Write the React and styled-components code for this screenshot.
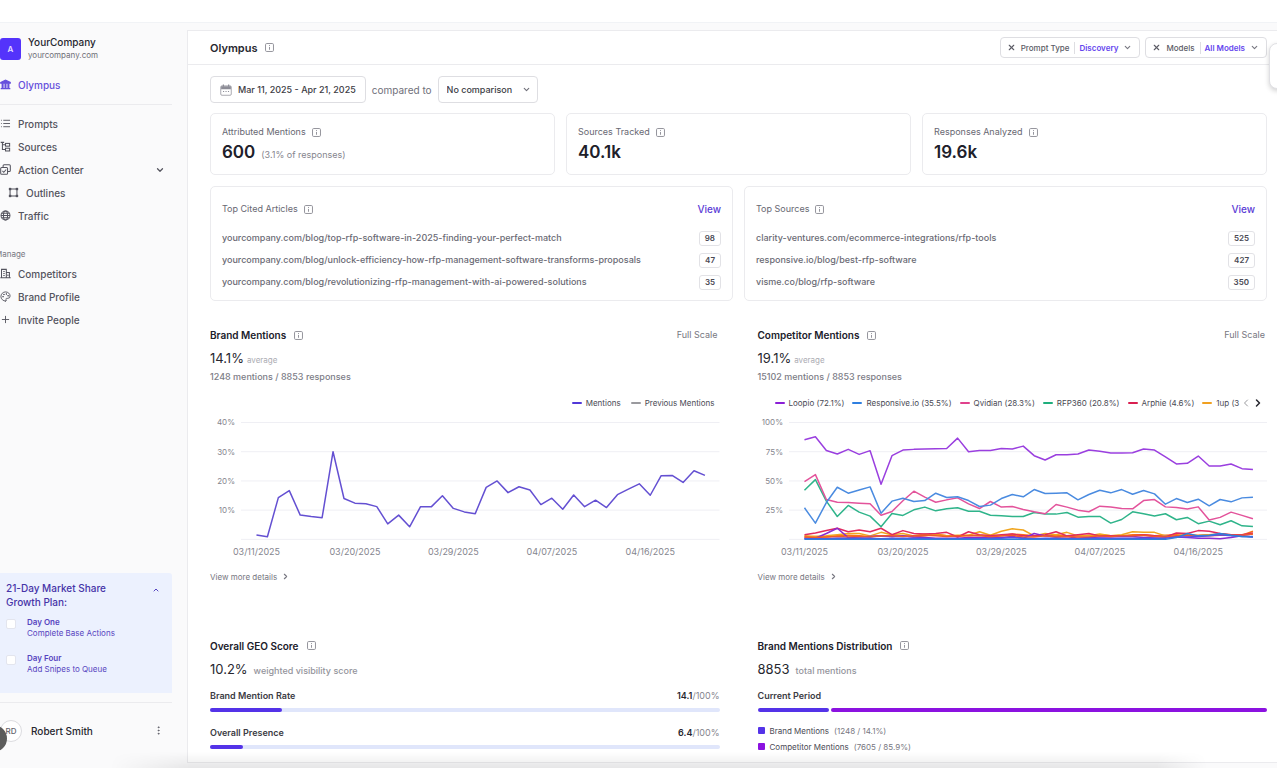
import React, { useState } from "react";
import styled, { createGlobalStyle } from "styled-components";
import { ChevronDown, ChevronUp, ChevronLeft, ChevronRight, List, Palette, Plus, X, EllipsisVertical } from "lucide-react";

const GlobalStyle = createGlobalStyle`
  * {
    box-sizing: border-box;
  }
  body {
    margin: 0;
    background: #ffffff;
    color: #27272f;
    font-family: Inter, "Liberation Sans", sans-serif;
    font-size: 9px;
    line-height: 12px;
  }
  button, select, input {
    font: inherit;
    color: inherit;
    margin: 0;
  }
  button {
    background: none;
    border: 0;
    padding: 0;
    cursor: pointer;
  }
  a {
    color: inherit;
    text-decoration: none;
  }
  h1, h2, p, ul {
    margin: 0;
    padding: 0;
  }
  small {
    line-height: 12px;
  }
  svg {
    flex: none;
  }
`;

const Page = styled.div`
  min-height: 100vh;
  display: flex;
  flex-direction: column;
  overflow: hidden;
  padding: 22px 0 4px;
`;
const Shell = styled.div`
  flex: 1;
  display: flex;
  background: #fafafb;
  border-top: 1px solid #f1f3f6;
  position: relative;
  /* soft shade under the panel */
  &::after {
    content: "";
    position: absolute;
    left: 110px;
    right: 70px;
    bottom: 0;
    height: 16px;
    background: linear-gradient(transparent, rgba(0, 0, 0, 0.08));
    mask-image: linear-gradient(90deg, transparent, #000 80px, #000 calc(100% - 50px), transparent);
    pointer-events: none;
  }
`;

/* sidebar */
const Sidebar = styled.aside`
  width: 195px;
  flex: none;
  margin-left: -8px;
  padding: 13px 15px 0 8px;
  display: flex;
  flex-direction: column;
`;
const Company = styled.div`
  display: flex;
  align-items: center;
  gap: 7px;
`;
const Logo = styled.div`
  width: 21px;
  height: 22px;
  border-radius: 3px;
  background: #5433fb;
  color: #e4deff;
  font-size: 8px;
  font-weight: 600;
  display: flex;
  align-items: center;
  justify-content: center;
`;
const CompanyName = styled.div`
  font-size: 10px;
  font-weight: 500;
  line-height: 13px;
  color: #27272f;
`;
const CompanyUrl = styled.div`
  font-size: 8px;
  color: #6f6f78;
`;
const NavLink = styled.a`
  display: flex;
  align-items: center;
  gap: 7px;
  height: 23px;
  padding-left: ${(props) => (props.$nested ? "8px" : "0")};
  margin-top: ${(props) => (props.$active ? "12px" : "0")};
  font-size: 10px;
  font-weight: 500;
  color: ${(props) => (props.$active ? "#6650dc" : "#54545e")};
  svg:last-child {
    margin: 0 7px 0 auto;
  }
`;
const Rule = styled.hr`
  width: 100%;
  border: 0;
  border-top: 1px solid #ebebee;
  margin: ${(props) => props.$space};
`;
const GroupLabel = styled.div`
  margin: 21px 0 2px -5px;
  font-size: 8px;
  color: #777781;
`;
const Plan = styled.section`
  margin-top: auto;
  min-height: 120px;
  padding: 8px 12px 4px 6px;
  background: #ecf1fe;
  border-radius: 0 3px 0 0;
  color: #5745c0;
`;
const PlanHead = styled.div`
  display: flex;
  justify-content: space-between;
  align-items: flex-start;
  margin-bottom: 8px;
  h2 {
    width: 110px;
    font-size: 10px;
    line-height: 14px;
    font-weight: 500;
    color: #4634a8;
  }
  button {
    height: 16px;
    padding-top: 4px;
  }
`;
const Task = styled.label`
  display: flex;
  gap: 11px;
  margin-bottom: 14px;
  line-height: 11px;
  font-size: 8px;
  b {
    display: block;
    font-weight: 600;
  }
  input {
    appearance: none;
    width: 10px;
    height: 10px;
    margin-top: 2px;
    background: #fff;
    border: 1px solid #e3e5ee;
    border-radius: 2px;
  }
`;
const User = styled.div`
  display: flex;
  align-items: center;
  gap: 9px;
  height: 38px;
  margin-bottom: 18px;
  font-size: 10px;
  font-weight: 500;
  button {
    margin-left: auto;
    margin-right: 8px;
    height: 12px;
    color: #5c5c66;
  }
`;
const Avatar = styled.div`
  width: 22px;
  height: 22px;
  border: 1px solid #dcdce0;
  border-radius: 50%;
  background: #fff;
  font-size: 8px;
  color: #63636c;
  display: flex;
  align-items: center;
  justify-content: center;
`;
const Bubble = styled.div`
  position: absolute;
  left: -20px;
  bottom: 16px;
  width: 27px;
  height: 27px;
  border-radius: 50%;
  background: #5c5c5c;
`;
const SideTab = styled.div`
  position: absolute;
  right: -14px;
  top: 20px;
  width: 22px;
  height: 46px;
  background: #fff;
  border: 1px solid #e0e0e4;
  border-radius: 8px;
  box-shadow: 0 2px 5px rgba(0, 0, 0, 0.18);
`;

/* main panel */
const Main = styled.main`
  flex: 1;
  min-width: 0;
  margin: 7px 0 5px;
  background: #fff;
  border: 1px solid #ebebee;
  border-right: 0;
`;
const TopBar = styled.header`
  display: flex;
  align-items: center;
  height: 34px;
  padding: 0 10px 0 22px;
  border-bottom: 1px solid #ebebee;
  gap: 6px;
  h1 {
    font-size: 11px;
    font-weight: 600;
    margin-right: 2px;
  }
`;
const Filters = styled.div`
  margin-left: auto;
  display: flex;
  gap: 5px;
`;
const Filter = styled.div`
  display: flex;
  align-items: center;
  height: 21px;
  padding: 0 7px 0 6px;
  border: 1px solid #dedee2;
  border-radius: 4px;
  font-size: 8px;
  font-weight: 500;
  color: #5c5c66;
  > button:first-child {
    display: flex;
    margin-right: 5px;
  }
`;
const FilterValue = styled.button`
  display: flex;
  align-items: center;
  gap: 5px;
  margin-left: 5px;
  padding-left: 4px;
  border-left: 1px solid #dedee2;
  font-weight: 600;
  color: #6446ee;
  svg {
    color: #777781;
  }
`;
const Content = styled.div`
  padding: 11px 10px 0 22px;
`;
const Controls = styled.div`
  display: flex;
  align-items: center;
  gap: 6px;
  color: #70707a;
  margin-bottom: 10px;
  label {
    font-size: 10px;
  }
`;
const ControlButton = styled.button`
  display: flex;
  align-items: center;
  gap: 6px;
  height: 27px;
  padding: 0 9px;
  border: 1px solid #dedee2;
  border-radius: 4px;
  background: #fff;
  font-weight: 500;
  color: #3c3c44;
`;
const SelectBox = styled.div`
  position: relative;
  select {
    appearance: none;
    height: 27px;
    padding: 0 24px 0 8px;
    border: 1px solid #dedee2;
    border-radius: 4px;
    background: #fff;
    font-weight: 500;
    color: #3c3c44;
  }
  svg {
    position: absolute;
    right: 7px;
    top: 9px;
    pointer-events: none;
  }
`;
const Columns = styled.div`
  display: grid;
  grid-template-columns: repeat(${(props) => props.$count}, minmax(0, 1fr));
  gap: ${(props) => props.$gap};
  margin-bottom: ${(props) => props.$after};
`;
const Card = styled.section`
  border: 1px solid #ebebee;
  border-radius: 5px;
  padding: ${(props) => props.$pad};
`;
const Label = styled.h2`
  display: flex;
  align-items: center;
  gap: 6px;
  font-size: 9px;
  font-weight: 400;
  line-height: 12px;
  color: #686872;
`;
const StatValue = styled.p`
  display: flex;
  align-items: baseline;
  gap: 6px;
  margin-top: 2px;
  font-size: 17px;
  line-height: 24px;
  font-weight: 600;
  color: #20202a;
  small {
    font-size: 9px;
    font-weight: 400;
    color: #85858e;
  }
`;
const CardHead = styled.div`
  display: flex;
  justify-content: space-between;
  align-items: center;
  margin-bottom: 12px;
  a {
    font-size: 10px;
    font-weight: 500;
    color: #5b40d6;
  }
`;
const LinkRow = styled.li`
  display: flex;
  justify-content: space-between;
  align-items: center;
  height: 22px;
  font-weight: 500;
  color: #6a6a74;
`;
const Count = styled.span`
  min-width: 20px;
  height: 15px;
  padding: 0 5px;
  border: 1px solid #e2e2e6;
  border-radius: 3px;
  text-align: center;
  font-size: 8px;
  line-height: 13px;
  font-weight: 600;
  color: #4a4a54;
`;
const Section = styled.section`
  min-width: 0;
`;
const SectionHead = styled.div`
  display: flex;
  align-items: center;
  justify-content: space-between;
  padding-right: 2px;
  color: #777781;
  h2 {
    display: flex;
    align-items: center;
    gap: 8px;
    font-size: 10px;
    font-weight: 600;
    line-height: 14px;
    color: #20202a;
  }
`;
const Figure = styled.p`
  display: flex;
  align-items: baseline;
  gap: ${(props) => props.$gap || "3px"};
  margin-top: 6px;
  font-size: 13px;
  line-height: 20px;
  color: #27272f;
  small {
    font-size: ${(props) => props.$note || "8px"};
    font-weight: ${(props) => (props.$note ? 500 : 400)};
    color: ${(props) => (props.$note ? "#94949c" : "#acacb3")};
  }
`;
const Summary = styled.p`
  margin: 3px 0 14px;
  font-weight: 500;
  color: #7c7c86;
`;
const Legend = styled.ul`
  display: flex;
  align-items: center;
  justify-content: ${(props) => (props.$end ? "flex-end" : "flex-start")};
  gap: ${(props) => (props.$end ? "10px" : "8px")};
  padding: ${(props) => (props.$end ? "0 5px 0 0" : "0 0 0 17px")};
  list-style: none;
  font-size: 8px;
  line-height: 12px;
  color: #4a4a54;
  white-space: nowrap;
`;
const LegendClip = styled.div`
  flex: 1;
  min-width: 0;
  overflow: hidden;
`;
const LegendBar = styled.div`
  display: flex;
  align-items: center;
  padding-right: 3px;
  button {
    height: 12px;
  }
`;
const LegendItem = styled.li`
  display: flex;
  align-items: center;
  gap: 4px;
  &::before {
    content: "";
    width: 10px;
    height: 2px;
    border-radius: 1px;
    background: ${(props) => props.$color};
  }
`;
const ChartSvg = styled.svg`
  display: block;
  width: 100%;
  height: auto;
  margin-top: 6px;
  font-size: 9px;
  fill: #85858e;
`;
const TickLabel = styled.text`
  font-size: 8px;
`;
const More = styled.a`
  display: flex;
  width: fit-content;
  align-items: center;
  gap: 4px;
  margin-top: 12px;
  color: #777781;
  font-size: 8px;
`;
const Meter = styled.div`
  margin-top: ${(props) => props.$top};
`;
const MeterLabel = styled.div`
  display: flex;
  justify-content: space-between;
  font-size: 9px;
  font-weight: 600;
  line-height: 14px;
  color: #3c3c44;
  span {
    font-weight: 400;
    color: #85858e;
  }
  b {
    font-weight: 600;
    color: #27272f;
  }
`;
const Track = styled.div`
  display: flex;
  gap: 2px;
  height: 4px;
  margin-top: 5px;
  border-radius: 2px;
  background: ${(props) => props.$bg || "transparent"};
`;
const Fill = styled.div`
  height: 4px;
  border-radius: 2px;
  background: ${(props) => props.$color};
`;
const Keys = styled.div`
  display: grid;
  gap: 4px;
  margin-top: 13px;
`;
const Key = styled.p`
  display: flex;
  align-items: center;
  gap: 5px;
  font-size: 8px;
  line-height: 12px;
  color: #4a4a54;
  &::before {
    content: "";
    width: 7px;
    height: 7px;
    border-radius: 1px;
    background: ${(props) => props.$color};
  }
  span {
    color: #777781;
  }
`;

const Glyph = ({ children, size = 11, fill = "none" }) => (
  <svg width={size} height={size} viewBox="0 0 16 16" fill={fill} stroke="currentColor" strokeWidth="1.5" aria-hidden="true">
    {children}
  </svg>
);

const InfoIcon = () => (
  <svg width="9" height="9" viewBox="0 0 12 12" fill="none" stroke="#92929a" strokeWidth="1.3" aria-hidden="true">
    <rect x="0.7" y="0.7" width="10.6" height="10.6" rx="1.6" />
    <path d="M6 5.3V9M6 2.8v1.3" />
  </svg>
);

const BankIcon = () => (
  <Glyph fill="currentColor">
    <path d="M1 5 8 1.5 15 5v1H1zM1 14h14" />
    <path d="M3.8 6v8M8 6v8M12.2 6v8" strokeWidth="3" />
  </Glyph>
);
const TreeIcon = () => (
  <Glyph>
    <path d="M1 2h5M3.5 2v10.5h4M3.5 5.5h4" />
    <rect x="8" y="3.5" width="6" height="4" />
    <rect x="8" y="10.5" width="6" height="4" />
  </Glyph>
);
const StackIcon = () => (
  <Glyph>
    <rect x="1" y="5" width="10" height="10" rx="1.5" />
    <path d="M4.5 5V2.5Q4.5 1 6 1h7.500Q15 1 15 2.500v7Q15 11 13.500 11H11M3.500 10l2 2 3.500-4" />
  </Glyph>
);
const OutlineIcon = () => (
  <Glyph>
    <path d="M3 3h10v10H3z" />
    <path d="M1.5 1.5h3v3h-3zM11.5 1.5h3v3h-3zM1.5 11.5h3v3h-3zM11.5 11.5h3v3h-3z" fill="currentColor" strokeWidth="0.5" />
  </Glyph>
);
const GlobeIcon = () => (
  <Glyph>
    <circle cx="8" cy="8" r="6.5" />
    <ellipse cx="8" cy="8" rx="3" ry="6.5" />
    <path d="M1.5 8h13M2.5 4.7h11M2.5 11.3h11" />
  </Glyph>
);
const BuildingIcon = () => (
  <Glyph>
    <path d="M0.5 14.2h15M2.2 14V2h7v12M9.2 6.5h4.5V14M4.8 5h2M4.8 8h2M4.8 11h2M11.5 9.5v2" />
  </Glyph>
);
const CalendarIcon = () => (
  <svg width="12" height="12" viewBox="0 0 16 16" fill="none" stroke="#8c8c96" aria-hidden="true">
    <rect x="1" y="2.5" width="14" height="12.5" rx="1.5" />
    <path d="M1.5 5h13" strokeWidth="4" />
    <path d="M4.5 0.5v3M11.5 0.5v3" strokeWidth="1.6" />
    <path d="M4 10h1.5M7.3 10h1.5M10.6 10h1.5" strokeWidth="1.3" />
  </svg>
);

const mentions = [
  1.5, 0.9, 14.3, 16.7, 8.3, 7.8, 7.4, 30, 14, 12.4, 12.2, 11.2, 5.3, 8.3, 4.3, 11.2, 11.2, 14.9, 10.6, 9.4, 8.8,
  17.8, 20, 16, 18, 16.9, 11.9, 14.1, 10.3, 15.2, 11.2, 13.4, 10.9, 15.3, 17.2, 19, 15.1, 21.8, 21.9, 19.5, 23.5, 21.9,
];

const competitors = [
  {
    color: "#f97316",
    values: [2, 2.5, 2, 3, 3.5, 3, 2.5, 3, 2.5, 3, 2, 3, 4.5, 3, 2.5, 3.5, 3, 3.5, 3, 4.5, 4, 3, 3, 3.5, 3, 3, 3.5, 4, 3, 3, 4, 4, 3, 3.5, 4, 3, 3.5, 4, 4.5, 4, 3.5, 7],
  },
  {
    color: "#f0a51e",
    values: [3, 2.5, 3, 4, 5, 5, 3, 6, 4, 5, 3, 4.5, 4, 3, 3.5, 3.5, 6.5, 3.5, 7, 9, 8, 3, 5, 4, 6, 3, 3, 4.5, 3, 4, 6.5, 6, 6, 3, 3, 4, 3, 4, 3.5, 4, 4, 4.5],
  },
  {
    color: "#e02a5f",
    values: [4, 5.5, 7.5, 9.5, 6.5, 8, 6.5, 9.5, 4, 7.5, 5, 4.5, 5, 6, 2, 6.5, 4, 3, 4, 4.5, 3, 3, 4, 6.5, 3, 4, 5, 3, 3, 3, 3, 4, 3, 2, 5.5, 5, 7.5, 7, 5, 4, 4, 5.5],
  },
  {
    color: "#8b2bd0",
    values: [1, 1, 5, 9.5, 1.5, 2, 2.5, 3, 2.5, 3, 2, 1.5, 1, 1, 1, 1.5, 1.5, 2, 1.5, 2.5, 1, 5, 3, 2, 2.5, 1, 1.5, 2, 2, 2.5, 2.5, 1.5, 2, 2.5, 2, 1.5, 1, 1, 0.5, 1.5, 3, 2],
  },
  {
    color: "#ef5a2b",
    values: [2, 1.5, 2, 2.5, 2, 2.5, 2, 3, 3, 2.5, 3, 3.5, 3, 2.5, 3, 3, 3.5, 2, 3, 3.5, 2, 2, 3, 2, 2.5, 2, 2, 3, 2.5, 3, 3, 3.5, 2.5, 2, 3, 3.5, 3, 3, 3.5, 3.5, 3.5, 4.5],
  },
  {
    color: "#5b4be8",
    values: [0.5, 0.5, 0.5, 1, 1, 1, 1, 0.5, 1, 1, 1, 1, 0.5, 0.5, 0.5, 0.5, 0.5, 1, 1, 1.5, 1, 0.5, 1, 1, 0.5, 0.5, 1, 1, 0.5, 1, 1, 1, 1, 1, 2, 2, 2.5, 3, 4, 3, 2.5, 2.5],
  },
  {
    color: "#2f7fd8",
    values: [0, 0, 0, 0, 0, 0, 0, 0, 0, 0, 0, 0, 0, 0, 0, 0, 0, 0, 0, 0, 0, 0, 0, 0, 0, 0, 0, 0, 0, 0, 0, 0, 0, 0, 1.5, 5, 3, 3.5, 5, 3.5, 2.5, 2],
  },
  {
    color: "#2fb48a",
    values: [42, 51.1, 32.7, 19.6, 29, 23.3, 19.9, 10.8, 22.2, 20.5, 25.3, 27.6, 24.4, 26.1, 27, 24.1, 24.1, 20.7, 20.2, 19.6, 19.6, 23, 21.6, 21.6, 23, 19, 19.6, 19.6, 13.9, 17, 23.6, 21.9, 19.9, 21.9, 16.8, 18.8, 13.4, 15.6, 12.5, 15.9, 11.6, 11.1],
  },
  {
    color: "#e3539b",
    values: [49.4, 55.4, 34.1, 31.8, 31.5, 31, 30.4, 20.7, 23.9, 33, 41.2, 36.1, 31.8, 33.8, 35.5, 30.4, 26.4, 32.4, 27.6, 28.1, 25.6, 23.6, 21.9, 29.8, 27.6, 25, 23.6, 28.4, 27.6, 26.4, 26.1, 33.2, 34.1, 27.8, 27.3, 25.9, 27.8, 16.5, 18.8, 23.3, 20.5, 17.6],
  },
  {
    color: "#4a8be0",
    values: [27, 13.9, 31.5, 44.6, 39.5, 42.3, 44.9, 22.4, 32.7, 35.2, 32.4, 33.2, 39.5, 35.8, 36.4, 33.2, 28.1, 29.3, 34.9, 38.4, 36.4, 42.6, 39.2, 39.5, 39.8, 33.8, 38.4, 42, 39.8, 42.6, 38.6, 41.8, 38.9, 30.1, 34.9, 31.5, 34.4, 28.7, 34.1, 32.1, 35.5, 36.1],
  },
  {
    color: "#9a3fdf",
    values: [85.2, 87.8, 76.1, 73, 77, 72.7, 75.9, 47.2, 71.6, 76.4, 77, 77.3, 77.6, 77.8, 86.6, 75, 76.1, 76.1, 77.8, 77.3, 79.8, 71.6, 67.9, 72.4, 72.4, 73, 76.4, 75.3, 73.9, 73.9, 74.1, 77.3, 76.4, 70.5, 64.5, 65.1, 71.3, 62.8, 62.8, 64.5, 60.5, 59.7],
  },
];

const competitorLegend = [
  ["Loopio (72.1%)", "#8b1fd6"],
  ["Responsive.io (35.5%)", "#2f7fe0"],
  ["Qvidian (28.3%)", "#e0418c"],
  ["RFP360 (20.8%)", "#1fae7c"],
  ["Arphie (4.6%)", "#d91f50"],
  ["1up (3", "#f0a020"],
];

const dates = ["03/11/2025", "03/20/2025", "03/29/2025", "04/07/2025", "04/16/2025"];

const LineChart = ({ label, series, max, ticks }) => {
  const toX = (i) => 46.5 + i * 10.95;
  const toY = (v) => 124.5 - (v / max) * 117;
  return (
    <ChartSvg viewBox="0 0 510 144" role="img" aria-label={label}>
      {[0, ...ticks].map((t) => (
        <line key={t} x1="31" x2="510" y1={toY(t)} y2={toY(t)} stroke="#efeff4" />
      ))}
      {ticks.map((t) => (
        <TickLabel key={t} x="25" y={toY(t) + 3} textAnchor="end">
          {t}%
        </TickLabel>
      ))}
      {dates.map((d, i) => (
        <text key={d} x={toX(i * 9)} y="140" textAnchor="middle">
          {d}
        </text>
      ))}
      {series.map(({ color, values }) => (
        <polyline
          key={color}
          fill="none"
          stroke={color}
          strokeWidth="1.5"
          strokeLinejoin="round"
          points={values.map((v, i) => `${toX(i)},${toY(v)}`).join(" ")}
        />
      ))}
    </ChartSvg>
  );
};

const Stat = ({ label, value, note }) => (
  <Card $pad="12px 11px 10px">
    <Label>
      {label} <InfoIcon />
    </Label>
    <StatValue>
      {value}
      {note && <small>{note}</small>}
    </StatValue>
  </Card>
);

const LinkList = ({ title, rows }) => (
  <Card $pad="16px 11px 7px">
    <CardHead>
      <Label>
        {title} <InfoIcon />
      </Label>
      <a href="#view">View</a>
    </CardHead>
    <ul>
      {rows.map(([url, count]) => (
        <LinkRow key={url}>
          <a href={`#${url}`}>{url}</a>
          <Count>{count}</Count>
        </LinkRow>
      ))}
    </ul>
  </Card>
);

const FilterPill = ({ name, value }) => (
  <Filter>
    <button type="button" aria-label={`Clear ${name}`}>
      <X size={9} strokeWidth={3} />
    </button>
    {name}
    <FilterValue type="button">
      {value} <ChevronDown size={9} strokeWidth={3} />
    </FilterValue>
  </Filter>
);

const Score = ({ label, value, top }) => (
  <Meter $top={top}>
    <MeterLabel>
      {label}
      <span>
        <b>{value}</b>/100%
      </span>
    </MeterLabel>
    <Track $bg="#e0e6fb">
      <Fill $color="#5433e8" style={{ width: `${value}%` }} />
    </Track>
  </Meter>
);

const tasks = [
  ["Day One", "Complete Base Actions"],
  ["Day Four", "Add Snipes to Queue"],
];

const App = () => {
  const [planOpen, setPlanOpen] = useState(true);

  return (
    <Page>
      <GlobalStyle />
      <Shell>
        <Sidebar>
          <Company>
            <Logo>A</Logo>
            <div>
              <CompanyName>YourCompany</CompanyName>
              <CompanyUrl>yourcompany.com</CompanyUrl>
            </div>
          </Company>
          <nav>
            <NavLink href="#olympus" $active><BankIcon /><span>Olympus</span></NavLink>
            <Rule $space="8px 0 7px" />
            <NavLink href="#prompts"><List size={11} /><span>Prompts</span></NavLink>
            <NavLink href="#sources"><TreeIcon /><span>Sources</span></NavLink>
            <NavLink href="#actions"><StackIcon /><span>Action Center</span><ChevronDown size={10} strokeWidth={3} /></NavLink>
            <NavLink href="#outlines" $nested><OutlineIcon /><span>Outlines</span></NavLink>
            <NavLink href="#traffic"><GlobeIcon /><span>Traffic</span></NavLink>
            <GroupLabel>Manage</GroupLabel>
            <NavLink href="#competitors"><BuildingIcon /><span>Competitors</span></NavLink>
            <NavLink href="#brand"><Palette size={11} /><span>Brand Profile</span></NavLink>
            <NavLink href="#invite"><Plus size={11} /><span>Invite People</span></NavLink>
          </nav>
          <Plan>
            <PlanHead>
              <h2>21-Day Market Share Growth Plan:</h2>
              <button type="button" aria-label="Toggle plan" onClick={() => setPlanOpen((prev) => !prev)}>
                <ChevronUp size={8} strokeWidth={3} />
              </button>
            </PlanHead>
            {planOpen &&
              tasks.map(([day, text]) => (
                <Task key={day}>
                  <input type="checkbox" />
                  <span>
                    <b>{day}</b>
                    {text}
                  </span>
                </Task>
              ))}
          </Plan>
          <Rule $space="9px 0" />
          <User>
            <Avatar>RD</Avatar>
            Robert Smith
            <button type="button" aria-label="Account menu">
              <EllipsisVertical size={11} />
            </button>
          </User>
        </Sidebar>

        <Main>
          <TopBar>
            <h1>Olympus</h1>
            <InfoIcon />
            <Filters>
              <FilterPill name="Prompt Type" value="Discovery" />
              <FilterPill name="Models" value="All Models" />
            </Filters>
          </TopBar>
          <Content>
            <Controls>
              <ControlButton type="button">
                <CalendarIcon /> Mar 11, 2025 - Apr 21, 2025
              </ControlButton>
              <label htmlFor="comparison">compared to</label>
              <SelectBox>
                <select id="comparison">
                  <option>No comparison</option>
                </select>
                <ChevronDown size={9} strokeWidth={3} />
              </SelectBox>
            </Controls>

            <Columns $count={3} $gap="11px" $after="11px">
              <Stat label="Attributed Mentions" value="600" note="(3.1% of responses)" />
              <Stat label="Sources Tracked" value="40.1k" />
              <Stat label="Responses Analyzed" value="19.6k" />
            </Columns>

            <Columns $count={2} $gap="11px" $after="27px">
              <LinkList
                title="Top Cited Articles"
                rows={[
                  ["yourcompany.com/blog/top-rfp-software-in-2025-finding-your-perfect-match", 98],
                  ["yourcompany.com/blog/unlock-efficiency-how-rfp-management-software-transforms-proposals", 47],
                  ["yourcompany.com/blog/revolutionizing-rfp-management-with-ai-powered-solutions", 35],
                ]}
              />
              <LinkList
                title="Top Sources"
                rows={[
                  ["clarity-ventures.com/ecommerce-integrations/rfp-tools", 525],
                  ["responsive.io/blog/best-rfp-software", 427],
                  ["visme.co/blog/rfp-software", 350],
                ]}
              />
            </Columns>

            <Columns $count={2} $gap="38px" $after="56px">
              <Section>
                <SectionHead>
                  <h2>Brand Mentions <InfoIcon /></h2>
                  Full Scale
                </SectionHead>
                <Figure>14.1% <small>average</small></Figure>
                <Summary>1248 mentions / 8853 responses</Summary>
                <Legend $end>
                  <LegendItem $color="#5238d8">Mentions</LegendItem>
                  <LegendItem $color="#9a9a9e">Previous Mentions</LegendItem>
                </Legend>
                <LineChart
                  label="Brand mentions by day"
                  series={[{ color: "#6450d2", values: mentions }]}
                  max={40}
                  ticks={[10, 20, 30, 40]}
                />
                <More href="#brand-details">View more details <ChevronRight size={9} strokeWidth={3} /></More>
              </Section>
              <Section>
                <SectionHead>
                  <h2>Competitor Mentions <InfoIcon /></h2>
                  Full Scale
                </SectionHead>
                <Figure>19.1% <small>average</small></Figure>
                <Summary>15102 mentions / 8853 responses</Summary>
                <LegendBar>
                  <LegendClip>
                    <Legend>
                      {competitorLegend.map(([name, color]) => (
                        <LegendItem key={name} $color={color}>{name}</LegendItem>
                      ))}
                    </Legend>
                  </LegendClip>
                  <button type="button" aria-label="Previous"><ChevronLeft size={12} color="#9a9a9e" /></button>
                  <button type="button" aria-label="Next"><ChevronRight size={12} strokeWidth={3} /></button>
                </LegendBar>
                <LineChart label="Competitor mentions by day" series={competitors} max={100} ticks={[25, 50, 75, 100]} />
                <More href="#competitor-details">View more details <ChevronRight size={9} strokeWidth={3} /></More>
              </Section>
            </Columns>

            <Columns $count={2} $gap="38px" $after="4px">
              <Section>
                <SectionHead>
                  <h2>Overall GEO Score <InfoIcon /></h2>
                </SectionHead>
                <Figure $gap="6px" $note="9px">10.2% <small>weighted visibility score</small></Figure>
                <Score label="Brand Mention Rate" value={14.1} top="10px" />
                <Score label="Overall Presence" value={6.4} top="14px" />
              </Section>
              <Section>
                <SectionHead>
                  <h2>Brand Mentions Distribution <InfoIcon /></h2>
                </SectionHead>
                <Figure $gap="6px" $note="9px">8853 <small>total mentions</small></Figure>
                <Meter $top="10px">
                  <MeterLabel>Current Period</MeterLabel>
                  <Track>
                    <Fill $color="#5433e8" style={{ width: "14.1%" }} />
                    <Fill $color="#8b12e0" style={{ width: "85.9%" }} />
                  </Track>
                </Meter>
                <Keys>
                  <Key $color="#5433e8">Brand Mentions <span>(1248 / 14.1%)</span></Key>
                  <Key $color="#8b12e0">Competitor Mentions <span>(7605 / 85.9%)</span></Key>
                </Keys>
              </Section>
            </Columns>
          </Content>
        </Main>
        <Bubble />
        <SideTab />
      </Shell>
    </Page>
  );
};

export default App;
